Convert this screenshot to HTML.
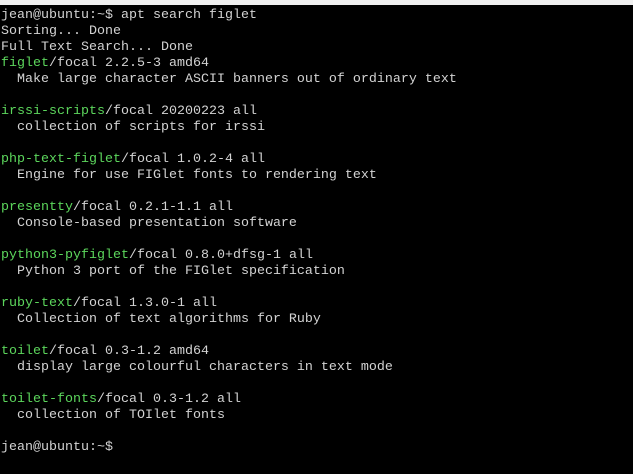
<!DOCTYPE html>
<html><head><meta charset="utf-8"><style>
html,body{margin:0;padding:0;background:#000;width:633px;height:474px;overflow:hidden}
.top{height:5px;background:#f0f0f0}
pre{margin:0;padding:3px 0 0 1px;font-family:"Liberation Mono","DejaVu Sans Mono",monospace;font-size:13.33px;line-height:16px;color:#d3d3d3;letter-spacing:0}
.g{color:#5cd65c}
</style></head><body><div class="top"></div><pre>jean@ubuntu:~$ apt search figlet
Sorting... Done
Full Text Search... Done
<span class="g">figlet</span>/focal 2.2.5-3 amd64
  Make large character ASCII banners out of ordinary text

<span class="g">irssi-scripts</span>/focal 20200223 all
  collection of scripts for irssi

<span class="g">php-text-figlet</span>/focal 1.0.2-4 all
  Engine for use FIGlet fonts to rendering text

<span class="g">presentty</span>/focal 0.2.1-1.1 all
  Console-based presentation software

<span class="g">python3-pyfiglet</span>/focal 0.8.0+dfsg-1 all
  Python 3 port of the FIGlet specification

<span class="g">ruby-text</span>/focal 1.3.0-1 all
  Collection of text algorithms for Ruby

<span class="g">toilet</span>/focal 0.3-1.2 amd64
  display large colourful characters in text mode

<span class="g">toilet-fonts</span>/focal 0.3-1.2 all
  collection of TOIlet fonts

jean@ubuntu:~$
</pre></body></html>
